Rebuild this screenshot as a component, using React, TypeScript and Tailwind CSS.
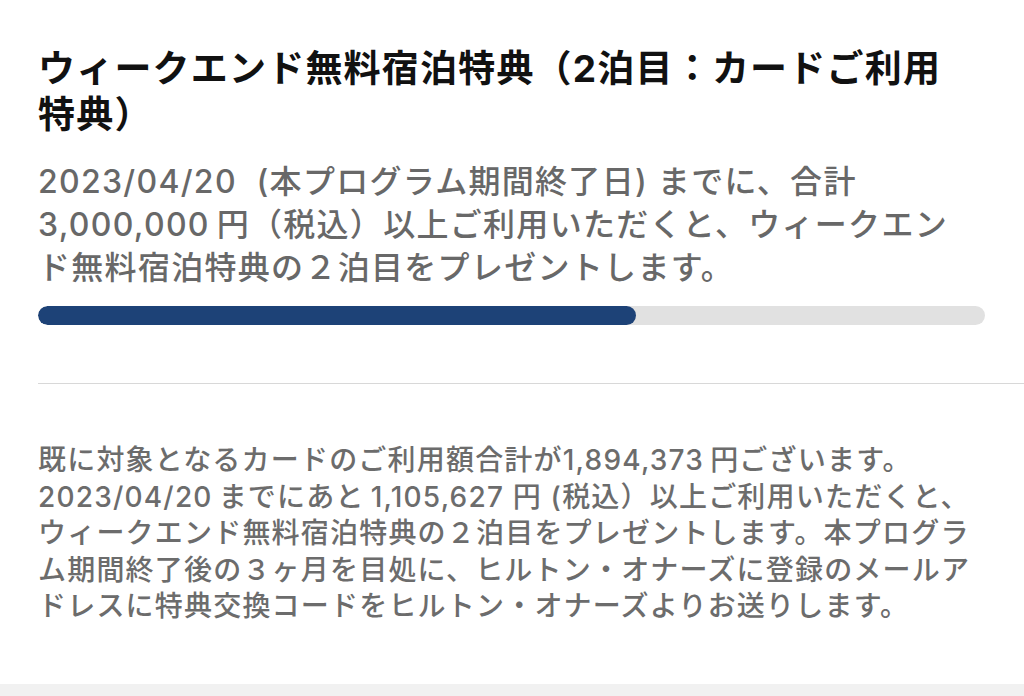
const jp = "font-['Inter','Noto_Sans_CJK_JP',sans-serif]"

// thin spaces where Latin runs meet kana/kanji, as in the source render
const bodyLines = [
  "2023/04/20  (本プログラム期間終了日) までに、合計",
  "3,000,000\u2009円（税込）以上ご利用いただくと、ウィークエン",
  "ド無料宿泊特典の２泊目をプレゼントします。",
]

const noteLines = [
  "既に対象となるカードのご利用額合計が1,894,373\u2009円ございます。",
  "2023/04/20\u2009までにあと\u20091,105,627 円 (税込）以上ご利用いただくと、",
  "ウィークエンド無料宿泊特典の２泊目をプレゼントします。本プログラ",
  "ム期間終了後の３ヶ月を目処に、ヒルトン・オナーズに登録のメールア",
  "ドレスに特典交換コードをヒルトン・オナーズよりお送りします。",
]

export default function App() {
  const spent = 1894373
  const goal = 3000000
  const pct = (spent / goal) * 100

  return (
    <div className={`w-[1024px] h-[696px] bg-white flex flex-col overflow-hidden ${jp}`}>
      <div className="px-[38px] pt-[46px]">
        <h1 className="text-[37px] leading-[46px] font-bold text-[#111111] tracking-[1.2px] whitespace-nowrap">
          ウィークエンド無料宿泊特典（2泊目：カードご利用
          <br />
          特典）
        </h1>

        <div className="mt-[22px] text-[32px] leading-[43px] font-medium text-[#686868] tracking-[1.3px] whitespace-pre">
          {bodyLines.map((l) => (
            <div key={l}>{l}</div>
          ))}
        </div>

        <div className="mt-[17px] mr-[1px] h-[19px] rounded-full bg-[#e1e1e1] overflow-hidden">
          <div
            className="h-full rounded-full bg-[#1d4277]"
            style={{ width: `${pct}%` }}
          />
        </div>
      </div>

      <div className="ml-[38px] mt-[58px] border-t border-[#d8d8d8]" />

      <div className="px-[38px] mt-[58px] text-[28px] leading-[36.5px] font-medium text-[#6c6c6c] tracking-[1.2px] whitespace-pre">
        {noteLines.map((l) => (
          <div key={l}>{l}</div>
        ))}
      </div>

      <div className="mt-auto h-[12px] bg-[#f1f1f1]" />
    </div>
  )
}
